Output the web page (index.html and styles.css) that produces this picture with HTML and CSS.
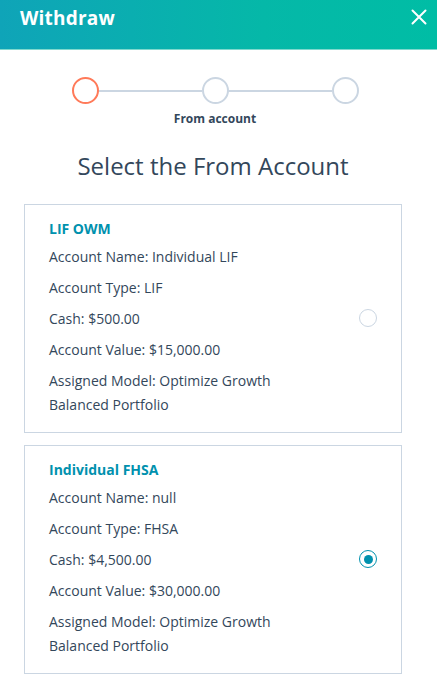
FILE: index.html
```html
<!DOCTYPE html>
<html>
<head>
<meta charset="utf-8">
<link rel="stylesheet" href="styles.css">
</head>
<body>
<header class="header">
  <h1 class="header-title">Withdraw</h1>
  <button class="close" aria-label="Close">
    <svg width="16" height="16" viewBox="0 0 16 16"><path d="M1.5 1.5L14.5 14.5M14.5 1.5L1.5 14.5" stroke="#fff" stroke-width="2" stroke-linecap="round"/></svg>
  </button>
</header>
<main class="content">
  <div class="stepper">
    <div class="step">
      <div class="dot dot-active"></div>
    </div>
    <div class="line"></div>
    <div class="step">
      <div class="dot"></div>
      <div class="step-label">From account</div>
    </div>
    <div class="line"></div>
    <div class="step">
      <div class="dot"></div>
    </div>
  </div>
  <h2 class="title">Select the From Account</h2>
  <div class="card">
    <div class="card-body">
      <div class="card-name">LIF OWM</div>
      <p class="row">Account Name: Individual LIF</p>
      <p class="row">Account Type: LIF</p>
      <p class="row">Cash: $500.00</p>
      <p class="row">Account Value: $15,000.00</p>
      <p class="row">Assigned Model: Optimize Growth<br>Balanced Portfolio</p>
    </div>
    <span class="radio"></span>
  </div>
  <div class="card">
    <div class="card-body">
      <div class="card-name">Individual FHSA</div>
      <p class="row">Account Name: null</p>
      <p class="row">Account Type: FHSA</p>
      <p class="row">Cash: $4,500.00</p>
      <p class="row">Account Value: $30,000.00</p>
      <p class="row">Assigned Model: Optimize Growth<br>Balanced Portfolio</p>
    </div>
    <span class="radio radio-on"></span>
  </div>
</main>
</body>
</html>
```
FILE: styles.css
```css
* { box-sizing: border-box; }
html, body { margin: 0; padding: 0; background: #fff; }
body {
  font-family: "Open Sans", "Noto Sans", sans-serif;
  color: #33475b;
  width: 437px;
  overflow: hidden;
}
.header {
  height: 50px;
  background: linear-gradient(90deg, #0fa4b8 0%, #05b8a8 60%, #00bda5 100%);
  display: flex;
  align-items: center;
  justify-content: space-between;
  padding: 0 10px 0 20px;
  border-bottom: 1px solid #7fd9ce;
}
.header-title {
  margin: 0 0 14px 0;
  color: #fff;
  font-size: 19px;
  font-weight: 700;
  letter-spacing: 0.2px;
}
.close {
  background: none;
  border: 0;
  padding: 0;
  width: 16px;
  height: 16px;
  margin: 0 0 16px 0;
  display: flex;
}
.content { padding: 27px 35px 0 24px; }
.stepper {
  display: flex;
  justify-content: center;
  align-items: flex-start;
  padding-left: 4px;
}
.step {
  width: 26px;
  position: relative;
  display: flex;
  flex-direction: column;
  align-items: center;
}
.dot {
  width: 27px;
  height: 27px;
  border-radius: 50%;
  border: 2px solid #cbd6e2;
  background: #fff;
  flex: none;
}
.dot-active { border-color: #ff7a59; }
.line {
  width: 104px;
  height: 2px;
  background: #cbd6e2;
  margin-top: 13px;
}
.step-label {
  white-space: nowrap;
  font-size: 12px;
  font-weight: 700;
  margin-top: 6px;
}
.title {
  text-align: center;
  font-size: 24px;
  font-weight: 400;
  margin: 24px 0 23px 0;
  line-height: 30px;
}
.card {
  border: 1px solid #cbd6e2;
  display: flex;
  align-items: center;
  padding: 14px 24px 15px 24px;
  margin-bottom: 12px;
}
.card-body { flex: 1; }
.card-name {
  color: #0091ae;
  font-weight: 700;
  font-size: 14px;
  line-height: 20px;
  margin-bottom: 6px;
}
.row {
  margin: 0 0 7px 0;
  font-size: 14px;
  line-height: 24px;
}
.row:last-child { margin-bottom: 0; }
.radio {
  width: 18px;
  height: 18px;
  border-radius: 50%;
  border: 1px solid #cbd6e2;
  flex: none;
  margin-top: 0;
  display: flex;
  align-items: center;
  justify-content: center;
}
.radio-on { border: 1.5px solid #0091ae; }
.radio-on::after {
  content: "";
  width: 9px;
  height: 9px;
  border-radius: 50%;
  background: #0091ae;
}
```
